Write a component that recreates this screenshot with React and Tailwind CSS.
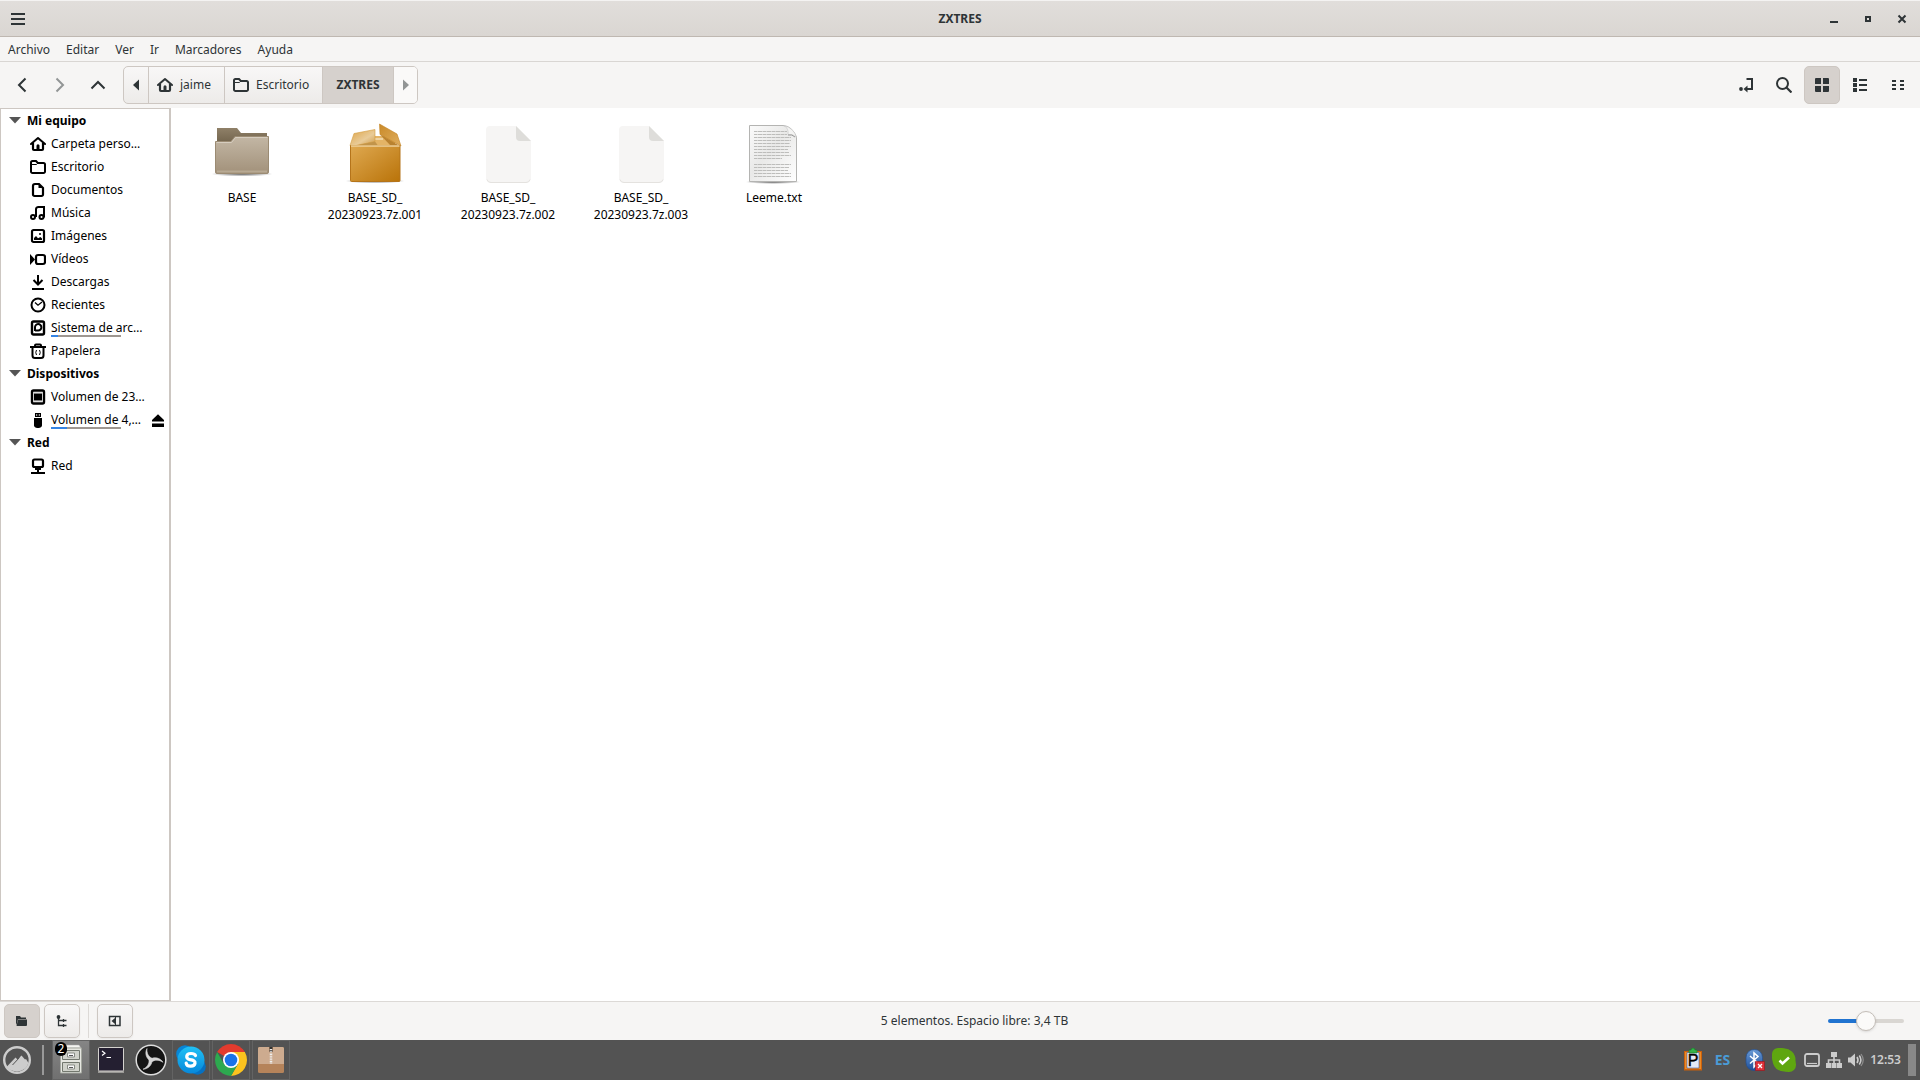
import React from "react";

const Svg = ({ size = 16, box = 16, className = "", children }) => (
  <svg width={size} height={size} viewBox={`0 0 ${box} ${box}`} fill="none" stroke="currentColor" className={`shrink-0 ${className}`} aria-hidden="true">
    {children}
  </svg>
);

const HomeIcon = () => (
  <Svg>
    <path d="M1 8 8 2l7 6" strokeWidth="2" strokeLinejoin="round" strokeLinecap="round" />
    <path d="M3 7V13a1 1 0 0 0 1 1h8a1 1 0 0 0 1-1V7" strokeWidth="2.200" />
    <path d="M6.500 14V9.800a1.500 1.500 0 0 1 3 0V14z" fill="currentColor" stroke="none" />
  </Svg>
);
const FolderIcon = () => (
  <Svg>
    <path d="M1 12.500V3.500A1.500 1.500 0 0 1 2.500 2H6l1.800 2H13.500A1.500 1.500 0 0 1 15 5.500v7A1.500 1.500 0 0 1 13.500 14h-11A1.500 1.500 0 0 1 1 12.500z" strokeWidth="2" />
    <path d="M2 5.500h4.500L8 4" strokeWidth="1" />
  </Svg>
);
const DocIcon = () => (
  <Svg>
    <path d="M5 2h4L13 6V12.500A1.500 1.500 0 0 1 11.500 14H4.500A1.500 1.500 0 0 1 3 12.500V4A2 2 0 0 1 5 2z" strokeWidth="2.200" />
    <path d="M8.500 1.500V6h4.500z" fill="currentColor" stroke="none" />
  </Svg>
);
const MusicIcon = () => (
  <Svg>
    <circle cx="3" cy="12" r="2" strokeWidth="2" />
    <circle cx="11.500" cy="12" r="2" strokeWidth="2" />
    <path d="M6 12V4A2.500 2.500 0 0 1 8.500 2H14v10.500" strokeWidth="2" />
  </Svg>
);
const ImageIcon = () => (
  <Svg>
    <rect x="2" y="2" width="12" height="12" rx="1.500" strokeWidth="2.200" />
    <path d="M4 12V10l2-2 2 2.300L10.500 9 12 10.500V12z" fill="currentColor" stroke="none" />
    <circle cx="10" cy="6" r="1" fill="currentColor" stroke="none" />
  </Svg>
);
const VideoIcon = () => (
  <Svg>
    <rect x="6" y="4" width="9" height="9" rx="2" strokeWidth="2.200" />
    <path d="M0 3 5 8.500 0 14z" fill="currentColor" stroke="none" />
  </Svg>
);
const DownloadIcon = () => (
  <Svg>
    <path d="M8 1v9M3.500 6 8 10.500 12.500 6M2 15h12" strokeWidth="2" />
  </Svg>
);
const ClockIcon = () => (
  <Svg>
    <circle cx="8" cy="8" r="6.500" strokeWidth="2" />
    <path d="m5 5.500 3 2.700 4-3.200" strokeWidth="1.300" />
  </Svg>
);
const DiskIcon = () => (
  <Svg>
    <rect x="2" y="1.500" width="12" height="13" rx="1.500" strokeWidth="2.400" />
    <path d="M5 11V7.500A3.200 3.200 0 1 1 8.200 10.500H5" strokeWidth="2" />
  </Svg>
);
const TrashIcon = () => (
  <Svg>
    <path d="M0 4h16M5 3.500V2.500A1 1 0 0 1 6 1.500h4a1 1 0 0 1 1 1v1M2.500 4v8.500A2.500 2.500 0 0 0 5 15h6a2.500 2.500 0 0 0 2.500-2.500V4" strokeWidth="2" />
    <path d="M6.500 7q-1.500 2.500 0 5M9.500 7q1.500 2.500 0 5" strokeWidth="1" />
  </Svg>
);
const ChipIcon = () => (
  <Svg>
    <rect x="2" y="1.500" width="12" height="13" rx="1.500" strokeWidth="2.400" />
    <path d="M4 5h8v6H4z" fill="currentColor" stroke="none" />
    <path d="M4.500 4.500h7M4.500 11.500h7" strokeWidth="1.600" strokeDasharray="1 1" />
  </Svg>
);
const UsbIcon = () => (
  <Svg>
    <path d="M4 6h8v6a3.500 3.500 0 0 1-3 4H7a3.500 3.500 0 0 1-3-4z" fill="currentColor" stroke="none" />
    <path fillRule="evenodd" d="M5 1h6v4H5zM6.200 2.300v1.400h1V2.300zM8.800 2.300v1.400h1V2.300z" fill="currentColor" stroke="none" />
  </Svg>
);
const NetIcon = () => (
  <Svg>
    <rect x="3" y="1.500" width="10" height="7.500" rx="1.500" strokeWidth="2.200" />
    <path d="M5 11h6M8 10v5M1 15h14" strokeWidth="2" />
  </Svg>
);

const places = [
  { title: "Mi equipo", items: [
    { label: "Carpeta perso…", Icon: HomeIcon },
    { label: "Escritorio", Icon: FolderIcon },
    { label: "Documentos", Icon: DocIcon },
    { label: "Música", Icon: MusicIcon },
    { label: "Imágenes", Icon: ImageIcon },
    { label: "Vídeos", Icon: VideoIcon },
    { label: "Descargas", Icon: DownloadIcon },
    { label: "Recientes", Icon: ClockIcon },
    { label: "Sistema de arc…", Icon: DiskIcon, used: 10 },
    { label: "Papelera", Icon: TrashIcon },
  ] },
  { title: "Dispositivos", items: [
    { label: "Volumen de 23…", Icon: ChipIcon },
    { label: "Volumen de 4,…", Icon: UsbIcon, used: 23, eject: true },
  ] },
  { title: "Red", items: [{ label: "Red", Icon: NetIcon }] },
];

function Sidebar() {
  return (
    <nav aria-label="Lugares" className="w-[171px] shrink-0 border border-r-2 border-[#cdc7c2] bg-white text-black">
      {places.map((group) => (
        <section key={group.title}>
          <button type="button" className="flex h-[23px] w-full items-center gap-1.5 pl-2 font-bold">
            <svg width="12" height="7" viewBox="0 0 12 7" className="text-[#555]" aria-hidden="true"><path d="M0 0h12L6 6.500z" fill="currentColor" /></svg>
            {group.title}
          </button>
          {group.items.map(({ label, Icon, used, eject }) => (
            <div key={label} className="flex h-[23px] items-center pr-[3px] pl-7">
              <a href="#" className="flex flex-1 items-center gap-1 whitespace-nowrap">
                <span className="w-[18px] pl-px"><Icon /></span>
                <span className="relative">
                  {label}
                  {used && (
                    <span className="absolute -bottom-px left-0 h-0.5 w-[70px] bg-[#9e9791]">
                      <span className="block h-full bg-[#3584e4]" style={{ width: `${used}%` }} />
                    </span>
                  )}
                </span>
              </a>
              {eject && (
                <button type="button" aria-label="Expulsar">
                  <Svg>
                    <path d="M8 2.200 14 8v1.500H2V8zM2 11.500h12V15H2z" fill="currentColor" stroke="none" />
                  </Svg>
                </button>
              )}
            </div>
          ))}
        </section>
      ))}
    </nav>
  );
}

const FolderArt = () => (
  <Svg size={64} box={64}>
    <defs>
      <linearGradient id="ff" x1="0" y1="0" x2="0" y2="1"><stop offset="0" stopColor="#c3b7a5" /><stop offset="1" stopColor="#a2917a" /></linearGradient>
      <linearGradient id="fb" x1="0" y1="0" x2="0" y2="1"><stop offset="0" stopColor="#8f8068" /><stop offset="1" stopColor="#6e6049" /></linearGradient>
      <radialGradient id="sh"><stop offset="0" stopColor="#000" stopOpacity=".6" /><stop offset="1" stopColor="#000" stopOpacity="0" /></radialGradient>
    </defs>
    <ellipse cx="32" cy="53" rx="31" ry="2.500" fill="url(#sh)" stroke="none" />
    <path d="M7 7h20l4 5h26v12H7z" fill="url(#fb)" stroke="none" />
    <path d="M5.500 20.500h15.500l4-5h33.500V51a1.500 1.500 0 0 1-1.500 1.500H7A1.500 1.500 0 0 1 5.500 51z" fill="url(#ff)" stroke="#9b8b73" />
    <path d="M6.500 21.500h15l4-5h32" stroke="#d6cdbf" />
    <path d="M7 50.500h50" stroke="#b8aa94" strokeWidth="2" />
  </Svg>
);
const BoxArt = () => (
  <Svg size={64} box={64}>
    <defs>
      <linearGradient id="bx" x1="0" y1="0" x2="1" y2="1"><stop offset="0" stopColor="#dfa951" /><stop offset="1" stopColor="#b97309" /></linearGradient>
      <linearGradient id="bl" x1="0" y1="0" x2="1" y2="1"><stop offset="0" stopColor="#dda344" /><stop offset=".6" stopColor="#e9cb98" /><stop offset="1" stopColor="#cf9b49" /></linearGradient>
      <linearGradient id="br" x1="0" y1="0" x2="1" y2="1"><stop offset="0" stopColor="#c98a28" /><stop offset="1" stopColor="#dfae60" /></linearGradient>
    </defs>
    <ellipse cx="32" cy="60" rx="30" ry="2.500" fill="url(#sh)" stroke="none" />
    <path d="M12 25V15h40v10z" fill="#e4b466" stroke="none" />
    <path d="M32 18h8" stroke="#efd3a2" strokeWidth="2" />
    <path d="M7 24.500 11 12.500 32 8.500V20.500l-19 4z" fill="url(#bl)" stroke="#d39a3d" strokeWidth=".6" />
    <path d="M13 24.500 32 20.500l3 4z" fill="#c2944a" stroke="none" />
    <path d="M36.500 3 54 13l4 12L37 13.500z" fill="url(#br)" stroke="#c38220" strokeWidth=".6" />
    <path d="M37 13.500l20 11.500H48z" fill="#b98230" stroke="none" />
    <path d="M7.500 24.500h49.500v35a1 1 0 0 1-1 1H8.500a1 1 0 0 1-1-1z" fill="url(#bx)" stroke="#b5741a" />
    <path d="M8 25h48.500" stroke="#eed09b" strokeWidth="1.500" />
  </Svg>
);
const BlankArt = () => (
  <Svg size={64} box={64}>
    <path d="M14 5h26l15 15v37a5 5 0 0 1-5 5H15a5 5 0 0 1-5-5V9a4 4 0 0 1 4-4z" fill="#f6f5f4" stroke="none" />
    <path d="M11 58.500A4 4 0 0 0 15 61.500h35a4 4 0 0 0 4-3" stroke="#e4e2df" />
    <path d="M40 5l15 15H44a4 4 0 0 1-4-4z" fill="#deddda" stroke="none" />
  </Svg>
);
const textLines = [[10, 43], [13, 43], [16, 47], [19, 47], [22, 46], [25, 47], [28, 44], [31, 45], [34, 47], [37, 38], [43, 47], [46, 45], [49, 44], [52, 47], [55, 47]];
const TextArt = () => (
  <Svg size={64} box={64}>
    <defs>
      <linearGradient id="tx" x1="0" y1="0" x2="1" y2="1"><stop offset="0" stopColor="#fbfbfb" /><stop offset=".45" stopColor="#e9e9e8" /><stop offset="1" stopColor="#fff" /></linearGradient>
    </defs>
    <ellipse cx="31" cy="61" rx="28" ry="2" fill="url(#sh)" stroke="none" />
    <path d="M7.500 4.500H41Q50 5 54.500 16v44.500h-47z" fill="url(#tx)" stroke="#b4b4b2" />
    {textLines.map(([y, x]) => <path key={y} d={`M12 ${y + 0.5}H${x + 2}`} stroke="#bdbdbb" strokeDasharray="3 .5 5 .5" />)}
    <path d="M42 4.500q5 3 4 9 5-1 8.500 3Q52 7 42 4.500z" fill="#f4f4f3" stroke="#c4c4c4" strokeWidth=".6" />
    <path d="M46 14q4-1 7 2" stroke="#999" />
  </Svg>
);

const files = [
  { lines: ["BASE"], Art: FolderArt },
  { lines: ["BASE_SD_", "20230923.7z.001"], Art: BoxArt },
  { lines: ["BASE_SD_", "20230923.7z.002"], Art: BlankArt },
  { lines: ["BASE_SD_", "20230923.7z.003"], Art: BlankArt },
  { lines: ["Leeme.txt"], Art: TextArt },
];

const ToolButton = ({ label, active, children }) => (
  <button type="button" aria-label={label} className={`flex h-[38px] w-9 items-center justify-center rounded-[5px] border ${active ? "border-[#cdc7c2] bg-[#d6d1cd]" : "border-transparent"}`}>
    {children}
  </button>
);
const StatusButton = ({ label, active, children }) => (
  <button type="button" aria-label={label} className={`flex h-[34px] w-9 items-center justify-center rounded-[5px] border border-[#cdc7c2] ${active ? "bg-[#d6d1cd]" : "bg-linear-to-b from-[#f8f7f7] to-[#edebe9] shadow-xs"}`}>
    {children}
  </button>
);
const Crumb = ({ active, className = "", children, label }) => (
  <button type="button" aria-label={label} className={`flex items-center border-r border-[#cdc7c2] last:border-r-0 ${active ? "bg-[#d6d1cd] font-bold" : ""} ${className}`}>
    {children}
  </button>
);

const TaskButton = ({ label, open, className = "", children }) => (
  <button type="button" aria-label={label} className={`relative flex h-full w-[38px] items-center justify-center border ${open ? "border-[#636363]" : "border-transparent"} ${className}`}>
    {children}
  </button>
);

function Taskbar() {
  return (
    <footer className="flex h-10 shrink-0 items-center justify-between bg-[#535353] pr-1">
      <div className="flex h-full items-center">
        <button type="button" aria-label="Menú" className="flex w-[34px] justify-center text-[#ccc]">
          <Svg size={30} box={30}>
            <circle cx="15" cy="15" r="12.800" strokeWidth="2.400" />
            <path d="M4.500 22 13.500 12.500l2 2L19.500 10.500l3.500 4 1-.5 2.500 4Q24 26 15 26.500 8 26 4.500 22z" fill="currentColor" stroke="none" />
            <path d="m10.500 20 7-7.500" stroke="#535353" strokeWidth="1" />
          </Svg>
        </button>
        <span className="mr-2 ml-2 h-[30px] w-0.5 bg-[#999]" />
        <div className="flex h-full gap-0.5">
          <TaskButton label="Archivos" open className="bg-linear-to-b from-[#858585] to-[#707070]">
            <Svg size={32} box={32}>
              <path d="M6 4 8 1h16l2 3z" fill="#f5f5f2" stroke="#aaa" strokeWidth=".5" />
              <path d="M5.500 4h21v25h-21z" fill="#e6e7e1" stroke="#a5a8a0" />
              <path d="M7.500 6.500h17v9h-17zM7.500 18.500h17v9h-17z" fill="#d0d2ca" stroke="#73786e" />
              <path d="M12.500 9h7v4h-7zM12.500 21h7v4h-7z" fill="#fafafa" stroke="#888c84" />
              <path d="M14 11.500h4M14 23.500h4" stroke="#555" />
            </Svg>
            <span className="absolute top-px left-0.5 flex h-3.5 w-3 items-center justify-center rounded-full bg-black text-xs text-white">2</span>
          </TaskButton>
          <TaskButton label="Terminal">
            <Svg size={28} box={28}>
              <path d="M1 25h26v2H1z" fill="#9a9996" stroke="none" />
              <rect x="1.500" y="1.500" width="25" height="23.500" rx="1" fill="#241f31" stroke="#d5d3cf" />
              <path d="m5 5 3 2.300L5 9.600M9.500 11.500H14" stroke="#fff" strokeWidth="1.200" />
            </Svg>
          </TaskButton>
          <TaskButton label="OBS">
            <Svg size={32} box={32}>
              <circle cx="16" cy="16" r="14.800" fill="#151515" stroke="#ddd" strokeWidth="1.500" />
              {[0, 120, 240].map((a) => (
                <path key={a} transform={`rotate(${a} 16 16)`} d="M16.500 17.500C11 15 9.500 9 12 4.500 11.500 9 13.500 13 17.500 14.500z" fill="#d6d6d6" stroke="#d6d6d6" strokeWidth=".6" />
              ))}
            </Svg>
          </TaskButton>
          <TaskButton label="Skype" open>
            <Svg size={32} box={32}>
              <defs><linearGradient id="sk" x1="0" y1="0" x2="0" y2="1"><stop offset="0" stopColor="#20c1f5" /><stop offset="1" stopColor="#0788da" /></linearGradient></defs>
              <circle cx="10" cy="10" r="8.800" fill="#0785d6" stroke="none" />
              <circle cx="22.500" cy="22.500" r="8.300" fill="#0671c2" stroke="none" />
              <circle cx="16" cy="16" r="13.500" fill="url(#sk)" stroke="none" />
              <path d="M20.500 11.500Q19.500 9.500 16 9.500c-5.500 0-5.500 5.300-1 6.200 3.500.6 5.500 1 5 3.700-.8 4-8.300 3.500-8.800-.2" stroke="#fff" strokeWidth="3.200" strokeLinecap="round" />
            </Svg>
          </TaskButton>
          <TaskButton label="Chrome" open>
            <Svg size={32} box={32}>
              <path d="M16 16 2.150 8A16 16 0 0 1 29.850 8z" fill="#e33b2e" stroke="none" />
              <path d="M16 8h13.850A16 16 0 0 1 16 32l6.900-12z" fill="#fcc31e" stroke="none" />
              <path d="M2.150 8A16 16 0 0 0 16 32l6.900-12L16 16 9 20z" fill="#2da94f" stroke="none" />
              <circle cx="16" cy="16" r="8" fill="#fff" stroke="none" />
              <circle cx="16" cy="16" r="6.300" fill="#1a73e8" stroke="none" />
            </Svg>
          </TaskButton>
          <TaskButton label="Gestor de archivadores" open>
            <Svg size={28} box={28}>
              <rect x="1" y="1" width="26" height="26" rx="1.500" fill="#b5835a" stroke="none" />
              <path d="M2.500 1H12v5l2 1.500L16 6V1h9.500A1.500 1.500 0 0 1 27 2.500V18H1V2.500A1.500 1.500 0 0 1 2.500 1z" fill="#cdab8f" stroke="none" />
              <path d="M12.500 1h3v5h-3z" fill="#333" stroke="none" />
              <path d="M14 3v15" stroke="#eee" strokeWidth="2.500" strokeDasharray="1 .7" />
            </Svg>
          </TaskButton>
        </div>
      </div>
      <div className="flex h-full items-center text-[#ccc]">
        <button type="button" aria-label="Portapapeles" className="mr-3">
          <svg width="20" height="24" viewBox="0 0 20 24" aria-hidden="true">
            <path d="M1 3h18v19.500H1z" fill="#c9600c" />
            <path d="M2 4h16v17H2z" fill="#ec8a25" />
            <path d="M4 4.500h12V20H4z" fill="#e5ebf8" stroke="#3d5da5" strokeWidth=".6" />
            <path d="M6 2h2a2 2 0 0 1 4 0h2v3H6z" fill="#35b44a" stroke="#187c2a" strokeWidth=".6" />
            <text x="10" y="18" textAnchor="middle" fontSize="16" fontFamily="Liberation Sans, sans-serif" fill="#000" stroke="#000" strokeWidth=".4">P</text>
          </svg>
        </button>
        <button type="button" className="mr-3.5 text-sm font-bold text-[#4a9bd6]">ES</button>
        <button type="button" aria-label="Bluetooth" className="mr-1.5">
          <Svg size={22} box={22}>
            <defs><linearGradient id="bt" x1="0" y1="0" x2="0" y2="1"><stop offset="0" stopColor="#6a9bd6" /><stop offset="1" stopColor="#1d4e98" /></linearGradient></defs>
            <rect x="2" y=".5" width="16.500" height="21" rx="8" fill="url(#bt)" stroke="#234f91" strokeWidth=".7" />
            <path d="m6 7 8 7-4 4V4l4 3.500L6 14.500" stroke="#fff" strokeWidth="1.500" />
            <path d="M11.500 12.500h9v9h-9z" fill="#df3038" stroke="#9e1118" strokeWidth=".6" />
            <path d="m14 15 4 4m0-4-4 4" stroke="#fff" strokeWidth="1.300" />
          </Svg>
        </button>
        <button type="button" aria-label="Estado de Skype" className="mr-2">
          <Svg size={24} box={24}>
            <rect x="0" y="0" width="16" height="16" rx="6" fill="#5fa610" stroke="none" />
            <rect x="9" y="9" width="15" height="15" rx="7" fill="#5fa610" stroke="none" />
            <circle cx="12" cy="12" r="11.500" fill="#5fa610" stroke="none" />
            <path d="m7.500 12.500 3 3 6.500-6" stroke="#fff" strokeWidth="2.500" />
          </Svg>
        </button>
        <button type="button" aria-label="Unidades extraíbles" className="mr-1.5">
          <Svg><rect x="1" y="2" width="14" height="12" rx="2" strokeWidth="1.800" /><path d="M3 11.500h10" strokeWidth="1.200" /></Svg>
        </button>
        <button type="button" aria-label="Red" className="mr-1.5">
          <Svg>
            <path d="M5 0h6v5H5zM0 11h5v5H0zM5.500 11h5v5h-5zM11 11h5v5h-5z" fill="currentColor" stroke="none" />
            <path d="M8 5v6M2.500 11V8h11v3" strokeWidth="1.600" />
          </Svg>
        </button>
        <button type="button" aria-label="Volumen" className="mr-1.5">
          <Svg>
            <path d="M0 5.500h2.500L7 1.500v13L2.500 10.500H0z" fill="currentColor" stroke="none" />
            <path d="M9 5q2 3 0 6" strokeWidth="1.600" />
            <path d="M11.300 3.500q3.200 4.500 0 9" strokeWidth="1.600" />
            <path d="M13 2q4.500 6 0 12" strokeWidth="1.200" opacity=".5" />
          </Svg>
        </button>
        <time className="mr-[7px] text-xs font-semibold">12:53</time>
        <button type="button" aria-label="Mostrar el escritorio" className="h-8 w-2 bg-[#888]" />
      </div>
    </footer>
  );
}

export default function App() {
  return (
    <div className="flex h-screen flex-col bg-[#f6f5f4] font-['Noto_Sans',sans-serif] text-xs text-[#2e3436]">
      <header className="grid h-[37px] shrink-0 grid-cols-[1fr_auto_1fr] items-center border-t border-b border-t-[#f4f3f2] border-b-[#bfb8b1] bg-linear-to-b from-[#e1dedb] to-[#dad6d2]">
        <button type="button" aria-label="Menú de ventana" className="ml-2.5 w-4">
          <Svg><path d="M1 3h14M1 8h14M1 13h14" strokeWidth="2" /></Svg>
        </button>
        <h1 className="font-bold">ZXTRES</h1>
        <div className="flex justify-end pr-px">
          <button type="button" aria-label="Minimizar" className="flex w-[34px] justify-center"><Svg><path d="M4 11h8" strokeWidth="2" /></Svg></button>
          <button type="button" aria-label="Maximizar" className="flex w-[34px] justify-center"><Svg><path d="M6 6h4v4H6z" strokeWidth="2" /></Svg></button>
          <button type="button" aria-label="Cerrar" className="flex w-[34px] justify-center"><Svg><path d="m4.500 4.500 7 7m0-7-7 7" strokeWidth="2" /></Svg></button>
        </div>
      </header>
      <nav aria-label="Menú" className="flex h-[25px] shrink-0 items-center gap-4 border-b border-[#d9d6d3] pt-0.5 pl-2">
        {["Archivo", "Editar", "Ver", "Ir", "Marcadores", "Ayuda"].map((m) => <button type="button" key={m}>{m}</button>)}
      </nav>
      <div className="flex h-[46px] shrink-0 items-center justify-between px-1">
        <div className="flex gap-0.5">
          <ToolButton label="Atrás"><Svg><path d="M11.500 1.500 5 8l6.500 6.500" strokeWidth="2" /></Svg></ToolButton>
          <ToolButton label="Adelante"><Svg className="text-[#929595]"><path d="M4.500 1.500 11 8l-6.500 6.500" strokeWidth="2" /></Svg></ToolButton>
          <ToolButton label="Subir"><Svg><path d="M1.500 11.500 8 5l6.500 6.500" strokeWidth="2" /></Svg></ToolButton>
          <div className="ml-[5px] flex h-[38px] overflow-hidden rounded-[5px] border border-[#cdc7c2] bg-linear-to-b from-[#f8f7f7] to-[#edebe9]">
            <Crumb label="Anteriores" className="w-[25px] justify-center"><Svg><path d="M11 2.500v11L5 8z" fill="currentColor" stroke="none" /></Svg></Crumb>
            <Crumb className="w-[76px] gap-[7px] pl-2"><HomeIcon />jaime</Crumb>
            <Crumb className="w-[98px] gap-[7px] pl-2"><FolderIcon />Escritorio</Crumb>
            <Crumb active className="w-[71px] justify-center">ZXTRES</Crumb>
            <Crumb label="Siguientes" className="w-[23px] justify-center bg-[#faf9f8] text-[#929595]"><Svg><path d="M5 2.500v11L11 8z" fill="currentColor" stroke="none" /></Svg></Crumb>
          </div>
        </div>
        <div className="flex gap-0.5">
          <ToolButton label="Ubicación"><Svg><path d="M8.500 2H14v10H8" strokeWidth="2" /><circle cx="3" cy="12" r="1.900" fill="currentColor" stroke="none" /><path d="M9.500 8.500v7L5.500 12z" fill="currentColor" stroke="none" /></Svg></ToolButton>
          <ToolButton label="Buscar"><Svg><circle cx="6.500" cy="6.500" r="5.500" strokeWidth="2" /><path d="m10.500 10.500 5 5" strokeWidth="2.200" /></Svg></ToolButton>
          <ToolButton label="Iconos" active><Svg><path d="M1 2a1 1 0 0 1 1-1h5v6H1zM9 1h5a1 1 0 0 1 1 1v5H9zM1 9h6v6H2a1 1 0 0 1-1-1zM9 9h6v5a1 1 0 0 1-1 1H9z" fill="currentColor" stroke="none" /></Svg></ToolButton>
          <ToolButton label="Lista"><Svg><path d="M1 1h4v4H1zM1 6h4v4H1zM1 11h4v4H1z" fill="currentColor" stroke="none" /><path d="M7 3h8M7 8h8M7 13h8" strokeWidth="2" /></Svg></ToolButton>
          <ToolButton label="Compacta"><Svg><path d="M2 4h4M10 4h4M2 8h4M10 8h4M2 12h4M10 12h4" strokeWidth="2" /></Svg></ToolButton>
        </div>
      </div>
      <div className="flex min-h-0 flex-1">
        <Sidebar />
        <main className="flex flex-1 flex-wrap content-start bg-white pt-[13px] pl-1 text-black">
          {files.map(({ lines, Art }) => (
            <button type="button" key={lines.join("")} className="flex w-[133px] flex-col items-center gap-1 leading-[17px]">
              <Art />
              <span className="pl-px">{lines.map((l) => <span key={l} className="block">{l}</span>)}</span>
            </button>
          ))}
        </main>
      </div>
      <div className="flex h-[39px] shrink-0 items-center border-t border-[#dcd9d6] px-1">
        <div className="flex items-center gap-1">
          <StatusButton label="Lugares" active><Svg><path d="M2 3h4l1 1.500h5V6H4L3 10l-1 2z" fill="currentColor" stroke="none" /><path d="M4 6.500h9V12a1 1 0 0 1-1 1H2.500z" fill="currentColor" stroke="none" /></Svg></StatusButton>
          <StatusButton label="Árbol"><Svg><circle cx="4.500" cy="4" r="1.900" fill="currentColor" stroke="none" /><path d="M4.500 4v8.500h8M4.500 7.500h8M9.500 6v3M9.500 11v3" strokeWidth="1.300" /></Svg></StatusButton>
          <span className="mx-1 h-[34px] w-px bg-[#dcd9d6]" />
          <StatusButton label="Ocultar barra lateral"><Svg><rect x="2.500" y="3.500" width="10.500" height="9" strokeWidth="1.500" /><path d="M8 5v6L4.500 8z" fill="currentColor" stroke="none" /><path d="M8.500 3.500v9" strokeWidth="1" /></Svg></StatusButton>
        </div>
        <p className="flex-1 text-center">5 elementos. Espacio libre: 3,4 TB</p>
        <input
          type="range"
          aria-label="Ampliación"
          min="0"
          max="100"
          defaultValue="50"
          className="mr-3 ml-3 h-5 w-[76px] appearance-none bg-transparent [&::-webkit-slider-runnable-track]:h-1 [&::-webkit-slider-runnable-track]:rounded-full [&::-webkit-slider-runnable-track]:bg-linear-to-r [&::-webkit-slider-runnable-track]:from-[#2073d0] [&::-webkit-slider-runnable-track]:from-50% [&::-webkit-slider-runnable-track]:to-[#d9d6d2] [&::-webkit-slider-runnable-track]:to-50% [&::-webkit-slider-thumb]:-mt-2 [&::-webkit-slider-thumb]:size-5 [&::-webkit-slider-thumb]:appearance-none [&::-webkit-slider-thumb]:rounded-full [&::-webkit-slider-thumb]:border [&::-webkit-slider-thumb]:border-[#c4beb8] [&::-webkit-slider-thumb]:bg-[#fbfaf9] [&::-webkit-slider-thumb]:shadow-sm"
        />
      </div>
      <Taskbar />
    </div>
  );
}
